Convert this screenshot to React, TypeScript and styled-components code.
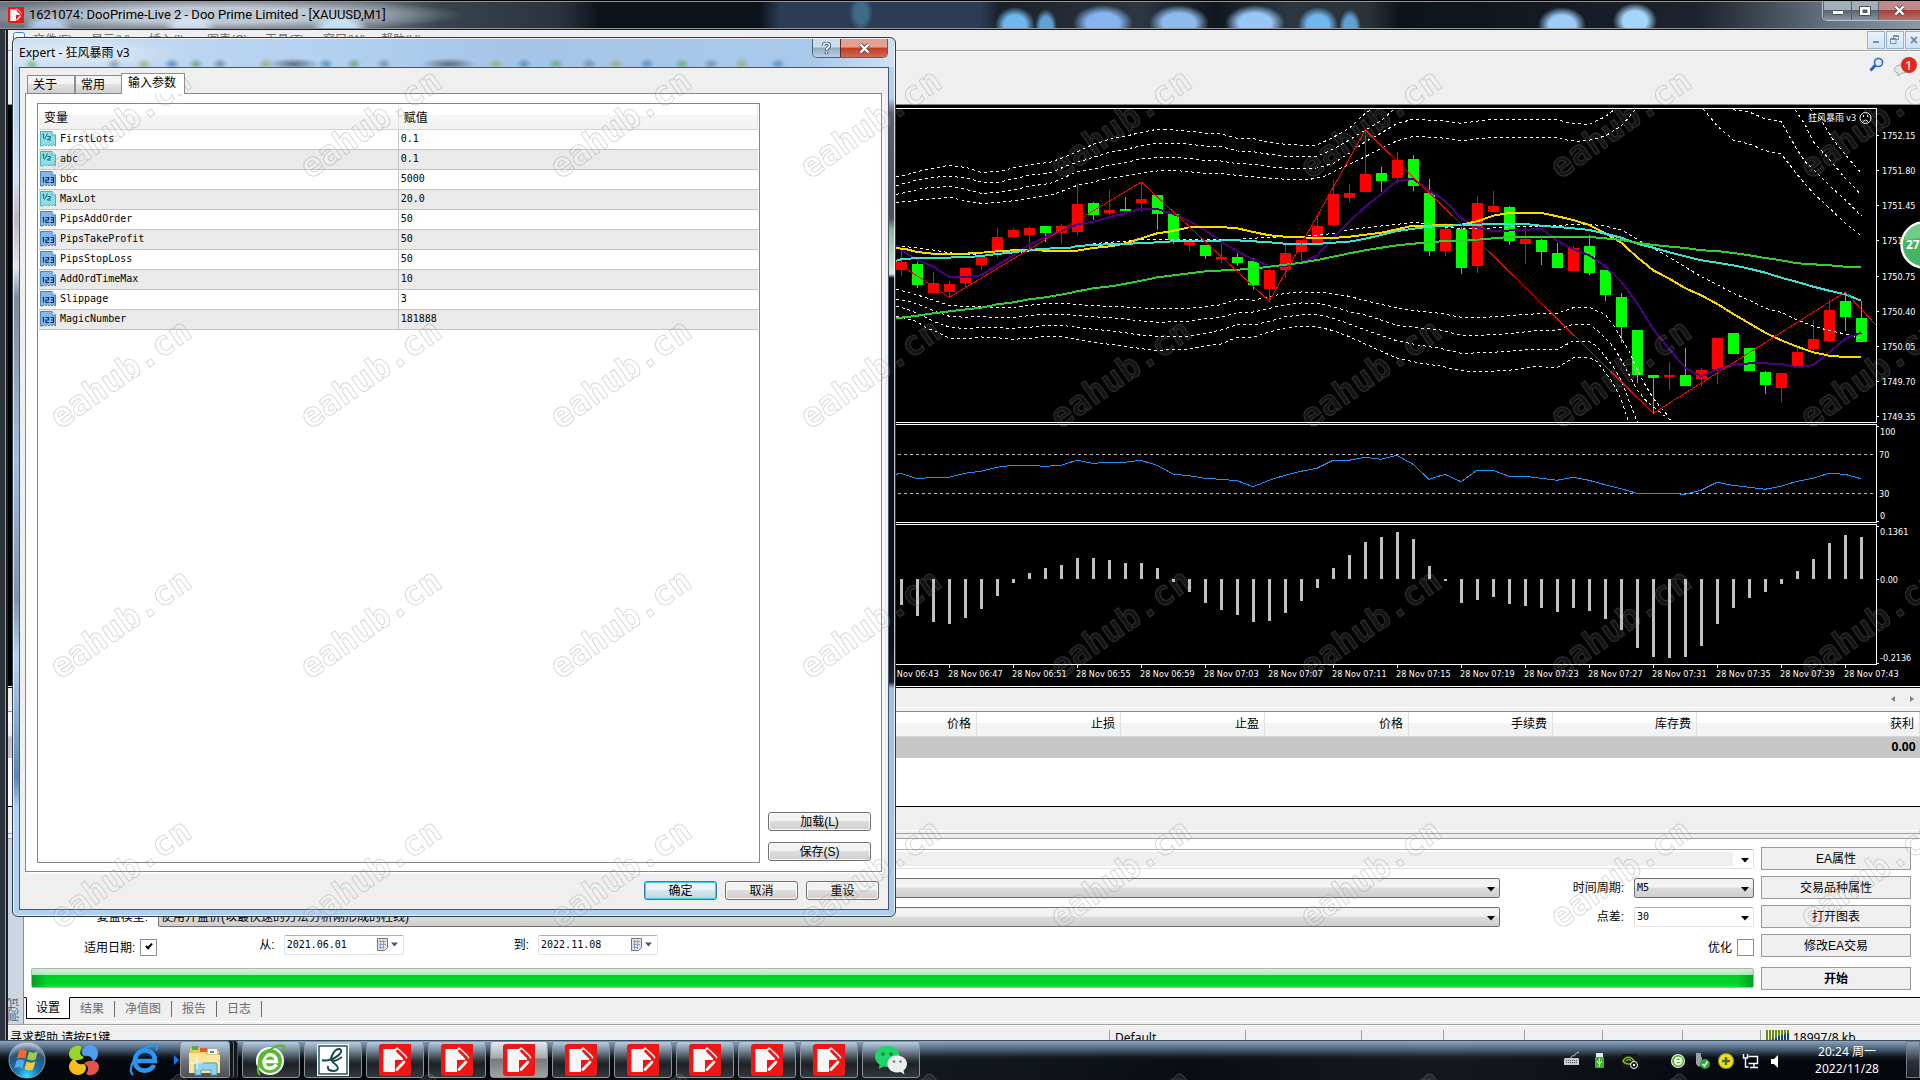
import React from "react";
import styled, { createGlobalStyle, css } from "styled-components";

const ui = `"Noto Sans", "Noto Sans CJK SC", sans-serif`;
const song = `"Liberation Sans", "Noto Sans CJK SC", sans-serif`;
const mono = `"DejaVu Sans Mono", "Noto Sans CJK SC", monospace`;

const Global = createGlobalStyle`
  *, *::before, *::after { box-sizing: border-box; }
  body { margin: 0; background: #000; font: 12px/16px ${song}; color: #000; }
  button, input, select { font: inherit; color: inherit; margin: 0; padding: 0; border-radius: 0; }
  svg { display: block; flex: none; }
`;

/* ---------- desktop and main window ---------- */

const Screen = styled.div`
  position: relative;
  display: flex;
  flex-direction: column;
  min-height: 100vh;
  overflow: hidden;
`;

const MainWindow = styled.main`
  flex: 1;
  display: flex;
  flex-direction: column;
  padding-left: 8px;
  background: linear-gradient(90deg, #2a323c 0 5px, #9aa3ac 5px 6px, #1a1e24 6px 8px, #efefef 8px);
`;

const blob = (x: number, w: number, c: string, y = 24) =>
  `radial-gradient(ellipse ${w}px 18px at ${x}px ${y}px, ${c} 0, ${c} 55%, transparent 100%)`;

const TitleBar = styled.header`
  display: flex;
  align-items: center;
  gap: 5px;
  height: 30px;
  margin-left: -8px;
  padding-left: 8px;
  border-top: 1px solid #000;
  border-bottom: 1px solid #15181c;
  box-shadow: inset 0 1px #8f959b, inset 0 -1px #8f959b;
  font: 13px/16px Roboto, ${ui};
  background:
    radial-gradient(ellipse 250px 17px at 215px 14px, rgba(222, 230, 240, 0.75) 0 45%, transparent 100%),
    ${blob(48, 26, "#a9c4ea", 30)},
    ${blob(190, 26, "#b8d4f4", 28)},
    ${blob(340, 30, "#b6dcf5", 30)},
    ${blob(861, 12, "#3d6a88", 12)},
    ${blob(1015, 20, "#6fb7ee")},
    ${blob(1046, 11, "#5fa3d4", 26)},
    ${blob(1103, 30, "#86b4ee", 22)},
    ${blob(1179, 30, "#8fbaee", 22)},
    ${blob(1255, 30, "#98c6f8", 22)},
    ${blob(1318, 20, "#6fb7ee")},
    ${blob(1350, 11, "#5fa3d4", 26)},
    ${blob(1562, 24, "#9dcbf8")},
    ${blob(1635, 22, "#a4d6fa", 20)},
    linear-gradient(90deg, #6b7680 0, #626d78 380px, #3a444e 440px, #2a333c 560px, #0d131b 600px, #0d131b 760px, #2c3c56 780px, #2c3c56 980px, #1a2028 1000px, #2c3742 1140px, #10161e 1215px, #2c3742 1290px, #2a3038 1370px, #0d131b 1400px, #10161e 1480px, #1d242d 1700px, #6a7886 1840px, #8b98a5 100%);
`;

const WindowTitle = styled.h1`
  flex: 1;
  margin: 0;
  font: inherit;
`;

const CaptionButtons = styled.div`
  display: flex;
  align-self: flex-start;
  height: 20px;
  border: 1px solid #b9c2cb;
  border-top: 0;
  border-right: 0;
  border-radius: 0 0 0 5px;
  overflow: hidden;
`;

const CaptionButton = styled.button<{ $w: number; $close?: boolean }>`
  display: grid;
  place-items: center;
  width: ${(p) => p.$w}px;
  border: 0;
  border-left: 1px solid #56616c;
  background: ${(p) =>
    p.$close
      ? "linear-gradient(#c08a8c 0 50%, #a8403c 50%, #b8706c)"
      : "linear-gradient(#a3aeb9 0 45%, #5a6672 50%, #8793a0)"};
`;

const MenuBar = styled.nav`
  display: flex;
  align-items: center;
  gap: 8px;
  height: 21px;
  padding: 0 0 0 5px;
  background: #efefef;
  border-bottom: 1px solid #a0a0a0;
  color: #707070;
`;

const MenuItem = styled.button`
  width: 50px;
  padding: 0;
  border: 0;
  background: none;
  text-align: left;
  white-space: nowrap;
`;

const MdiButtons = styled.div`
  display: flex;
  gap: 1px;
  margin: 0 -3px 0 auto;
`;

const MdiButton = styled.button`
  display: grid;
  place-items: center;
  width: 18px;
  height: 18px;
  border: 1px solid #9db2c8;
  background: linear-gradient(#eaf3fc, #cfe2f5);
`;

const ToolBar = styled.div`
  display: flex;
  align-items: flex-start;
  justify-content: flex-end;
  gap: 10px;
  height: 54px;
  padding: 5px 2px 0 0;
  background: #efefef;
  border-top: 1px solid #fff;
  border-bottom: 1px solid #8a8a8a;
`;

const IconButton = styled.button`
  border: 0;
  background: none;
`;

const ChartArea = styled.section`
  display: flex;
  justify-content: flex-end;
  height: 581px;
  background: #000;
  overflow: hidden;
`;

const ChartTabs = styled.div`
  display: flex;
  justify-content: flex-end;
  align-items: center;
  gap: 12px;
  height: 26px;
  padding-right: 4px;
  background: #efefef;
  border-top: 1px solid #fff;
  border-bottom: 1px solid #8c8c8c;
  box-shadow: inset 0 1px #000, inset 0 -3px #efefef, inset 0 -4px #fff;
`;

/* ---------- trade terminal ---------- */

const Terminal = styled.section`
  flex: 1;
  background: #fff;
`;

const TradeTable = styled.table`
  width: 100%;
  border-collapse: collapse;
  table-layout: fixed;
  text-align: right;
  font: 12px/16px ${ui};

  th {
    height: 24px;
    padding: 0 5px 0 0;
    font-weight: 400;
    background: linear-gradient(#fff 0 45%, #f4f5f6 45%, #f1f2f4);
    border-right: 1px solid #dfe1e5;
    border-bottom: 1px solid #d5d5d5;
  }
  td {
    height: 22px;
    padding: 0 4px 0 0;
    font-weight: 700;
    background: #c6c6c6;
    border-top: 1px solid #fff;
  }
`;

const TerminalTabs = styled.div`
  height: 33px;
  background: #efefef;
  border-top: 1px solid #000;
  border-bottom: 1px solid #a0a0a0;
  box-shadow: inset 0 -4px #efefef, inset 0 -5px #a0a0a0, inset 0 -7px #efefef, inset 0 -8px #fff;
`;

/* ---------- strategy tester ---------- */

const Tester = styled.section`
  display: flex;
`;

const SideTab = styled.div`
  display: flex;
  justify-content: flex-start;
  width: 16px;
  padding: 2px 0;
  background: #ccd6e2;
  border-left: 1px solid #8c8c8c;
  color: #5a6068;
  writing-mode: vertical-rl;
  transform: rotate(180deg);
  line-height: 15px;
`;

const TesterBody = styled.div`
  flex: 1;
  min-width: 0;
`;

const Form = styled.form`
  display: grid;
  grid-template-columns: 120px 1fr 120px 120px 150px;
  grid-template-rows: repeat(4, 23px) 27px;
  gap: 6px 7px;
  align-items: center;
  padding: 8px 9px 7px 7px;
  background: #fff;
  border-bottom: 1px solid #000;
`;

const Label = styled.label`
  justify-self: end;
  padding-right: 3px;
  white-space: nowrap;
`;

const SelectBox = styled.div<{ $span?: number; $flat?: boolean; $code?: boolean }>`
  position: relative;
  grid-column: span ${(p) => p.$span ?? 1};
  height: 20px;

  select {
    appearance: none;
    width: 100%;
    height: 100%;
    padding: 0 20px 0 2px;
    border: 1px solid #707070;
    border-radius: 2px;
    ${(p) => p.$code && `font: 10px/16px ${mono};`}
    background: linear-gradient(#f2f2f2 0 45%, #dcdcdc 50%, #cecece);
    ${(p) =>
      p.$flat &&
      css`
        border-color: #abadb3 #e2e3ea #e2e3ea #dbdfe6;
        background: #fff;
      `}
  }
  svg {
    position: absolute;
    right: 4px;
    top: 9px;
    pointer-events: none;
  }
`;

const GreySelectBox = styled(SelectBox)`
  select {
    background: linear-gradient(#efefef, #efefef) 0 2px / calc(100% - 20px) 14px no-repeat #fff;
  }
`;

const DateRow = styled.div`
  grid-column: 1 / 5;
  display: flex;
  align-items: center;
  padding-left: 53px;
`;

const DateLabel = styled.label`
  margin-bottom: 2px;
`;

const DateField = styled.div<{ $after?: number }>`
  display: flex;
  align-items: center;
  gap: 5px;
  width: 120px;
  height: 20px;
  margin: 0 ${(p) => p.$after ?? 0}px 2px 9px;
  padding: 0 4px 0 2px;
  border: 1px solid #e2e3ea;
  border-top-color: #abadb3;
  border-radius: 2px;

  input {
    flex: 1;
    min-width: 0;
    border: 0;
    font: 10px/16px ${mono};
  }
`;

const Check = styled.input`
  appearance: none;
  display: grid;
  place-items: center;
  width: 17px;
  height: 17px;
  margin: 0 0 0 5px;
  border: 1px solid #8c8c8c;
  background: #fff;

  &:checked::after {
    content: "";
    width: 4px;
    height: 7px;
    margin-bottom: 4px;
    border: solid #000;
    border-width: 0 2px 2px 0;
    transform: rotate(42deg);
  }
`;

const CheckLabel = styled.label`
  padding-top: 4px;
`;

const CheckWrap = styled.span`
  display: flex;
  align-items: center;
  padding-top: 4px;
`;

const Spacer = styled.span<{ $w?: number }>`
  ${(p) => (p.$w ? `width: ${p.$w}px;` : "flex: 1;")}
`;

const FlatButton = styled.button<{ $bold?: boolean }>`
  align-self: end;
  height: 23px;
  border: 1px solid #9a9a9a;
  background: #efefef;
  font-weight: ${(p) => (p.$bold ? 700 : 400)};
`;

const Progress = styled.div`
  grid-column: 1 / 5;
  align-self: end;
  height: 20px;
  margin-bottom: 2px;
  border: 1px solid #b2b2b2;
  border-radius: 2px;
  background:
    linear-gradient(rgba(255, 255, 255, 0.8), rgba(255, 255, 255, 0.65)) 0 0 / 100% 6px no-repeat,
    linear-gradient(90deg, #00a020, transparent 16px calc(100% - 16px), #00a020),
    linear-gradient(#00d228 0 75%, #18e038);
`;

const TesterTabs = styled.div`
  display: flex;
  align-items: flex-start;
  height: 26px;
  padding-left: 2px;
  background: #efefef;
  box-shadow: inset 0 -2px #efefef, inset 0 -3px #fff;
`;

const TesterTab = styled.button<{ $active?: boolean }>`
  height: 16px;
  margin-top: 3px;
  padding: 0 10px;
  border: 0;
  border-right: 1px solid #6d6d6d;
  background: none;
  color: #6d6d6d;
  ${(p) =>
    p.$active &&
    css`
      height: 22px;
      margin-top: -1px;
      padding: 0 9px;
      border: 1px solid #000;
      border-top-color: #fff;
      background: #fff;
      color: #000;
    `}
`;

const StatusBar = styled.footer`
  display: flex;
  align-items: flex-start;
  height: 16px;
  padding-top: 5px;
  background: #efefef;
  border-top: 1px solid #a0a0a0;
  box-shadow: inset 0 1px #fff;
  overflow: hidden;
  font: 12px/16px ${ui};
  white-space: nowrap;
`;

const StatusCell = styled.div<{ $w?: number }>`
  display: flex;
  gap: 4px;
  padding-left: 5px;
  height: 16px;
  border-left: 1px solid #a0a0a0;
  ${(p) => (p.$w ? `width: ${p.$w}px;` : "flex: 1; border-left: 0; padding-left: 2px;")}
`;

/* ---------- expert dialog ---------- */

const Dialog = styled.section`
  position: absolute;
  left: 12px;
  top: 37px;
  width: 884px;
  height: 880px;
  display: flex;
  flex-direction: column;
  padding: 0 7px 7px;
  border: 1px solid #2f3a47;
  border-radius: 6px;
  box-shadow: inset 0 0 0 1px rgba(255, 255, 255, 0.75);
  background:
    linear-gradient(#b4d1f0 0 60px, #5d636b 75px, #4b5158 180px, #8ab79a 192px, #d7e6da 236px, #0b1118 240px 610px, #1b232d 644px, #9fc0e2 650px, #a9cbee) right / 8px 100% no-repeat,
    linear-gradient(#b9d3ee 0 80px, #d3e2f2 140px, #c0b8c4 180px, #e4e6ee 230px, #7e8a99 260px, #a2bddd 420px, #7e93ad 560px, #b7d3f1 620px, #5f87af 740px, #b1d1f3 770px) left / 8px 100% no-repeat,
    linear-gradient(#a9c9ea, #b1d1f3);
`;

const DialogTitle = styled.header`
  display: flex;
  align-items: center;
  height: 28px;
  margin: 1px -6px 0;
  padding-left: 5px;
  font: 12px/16px ${ui};
  border-radius: 5px 5px 0 0;
  background:
    radial-gradient(ellipse 110px 18px at 60px 14px, rgba(255, 255, 255, 0.55), transparent),
    ${[18, 100, 130, 158, 182, 206, 252, 312, 340, 370, 482, 510, 542, 575, 602, 633, 668, 697, 728, 764]
      .map((x, i) => `radial-gradient(ellipse 8px 6px at ${x}px 25px, ${["#6fae8c", "#7b95ad", "#9eb08c", "#5f93c4"][i % 4]}, transparent)`)
      .join(",")},
    radial-gradient(ellipse 26px 6px at 280px 25px, #5c6f82, transparent),
    radial-gradient(ellipse 28px 6px at 435px 25px, #5c6f82, transparent),
    linear-gradient(90deg, #c7dcf1, #b4d1f0 300px, #a5c4e6 500px, #a9c9ea 800px, #cfe0f2);

  h2 {
    flex: 1;
    margin: 0;
    font: inherit;
  }
`;

const DialogCaption = styled.div`
  display: flex;
  align-self: flex-start;
  height: 19px;
  border: 1px solid #4f6478;
  border-top: 0;
  border-radius: 0 0 5px 5px;
  overflow: hidden;
  margin-right: 6px;

  button {
    display: grid;
    place-items: center;
    width: 27px;
    border: 0;
    background: linear-gradient(#c9dcee 0 45%, #93a9be 50%, #b6d0e8);
  }
  button + button {
    width: 47px;
    border-left: 1px solid #5b2a28;
    background: linear-gradient(#e6a090 0 45%, #c23c22 50%, #cf6a4c);
  }
`;

const DialogClient = styled.div`
  flex: 1;
  display: flex;
  flex-direction: column;
  min-height: 0;
  margin: 0 -1px -1px;
  padding: 5px 6px 9px 5px;
  border: 1px solid #46566a;
  background: #efefef;
`;

const Tabs = styled.div`
  display: flex;
  align-items: flex-end;
  padding-left: 2px;
  height: 20px;
`;

const Tab = styled.button<{ $active?: boolean }>`
  width: 48px;
  height: 18px;
  padding: 0 5px;
  border: 1px solid #8c8e96;
  border-bottom: 0;
  background: linear-gradient(#f3f3f3 0 50%, #e2e2e2 50%, #cfcfcf);
  text-align: left;
  ${(p) =>
    p.$active &&
    css`
      width: 64px;
      height: 21px;
      margin: 0 0 -1px -2px;
      padding: 0 6px 2px;
      background: #fff;
      z-index: 1;
    `}
`;

const Page = styled.div`
  flex: 1;
  display: flex;
  gap: 8px;
  min-height: 0;
  padding: 9px 10px 8px 11px;
  border: 1px solid #828790;
  box-shadow: 2px 2px #fbfbfb;
  background: #fff;
`;

const ListBox = styled.div`
  flex: 1;
  padding: 1px;
  border: 1px solid #828790;
`;

const ParamTable = styled.table`
  width: 100%;
  border-collapse: collapse;
  table-layout: fixed;

  th {
    height: 24px;
    padding: 2px 0 0 5px;
    text-align: left;
    font-weight: 400;
    background: linear-gradient(#fff 0 40%, #f5f6f7 40%, #f0f1f3);
    border-right: 1px solid #e3e4e8;
    border-bottom: 1px solid #d5d5d5;
  }
  td {
    height: 20px;
    padding: 0 0 0 2px;
    border-bottom: 1px solid #c4c4c4;
    font: 10px/16px ${mono};
  }
  td:first-child {
    padding: 0 0 0 1px;
    border-right: 1px solid #c4c4c4;
  }
  tbody tr:nth-child(even) td {
    background: #eaeaea;
  }
`;

const ParamName = styled.span`
  display: flex;
  align-items: center;
  gap: 4px;
`;

const SideButtons = styled.div`
  display: flex;
  flex-direction: column;
  justify-content: flex-end;
  gap: 11px;
  padding-bottom: 2px;
`;

const Button = styled.button<{ $w: number; $primary?: boolean }>`
  width: ${(p) => p.$w}px;
  height: 19px;
  line-height: 16px;
  border: 1px solid #707070;
  border-radius: 3px;
  box-shadow: inset 0 0 0 1px #fbfbfb;
  background: linear-gradient(#f2f2f2 0 48%, #dddddd 50%, #cfcfcf);
  ${(p) =>
    p.$primary &&
    css`
      border-color: #2c7fb0;
      box-shadow: inset 0 0 0 1px #3fcdf6;
      background: linear-gradient(#eaf4f9 0 48%, #d6e4ec 50%, #c4d5df);
    `}
`;

const DialogButtons = styled.div`
  display: flex;
  justify-content: flex-end;
  gap: 8px;
  padding: 9px 3px 0 0;
`;

/* ---------- taskbar ---------- */

const TaskBar = styled.footer`
  display: flex;
  align-items: center;
  height: 40px;
  padding-bottom: 2px;
  border-top: 1px solid #3c4c5c;
  background:
    linear-gradient(rgba(160, 195, 230, 0.85), rgba(120, 150, 180, 0.55) 9px, rgba(60, 80, 100, 0.15) 16px, transparent 20px),
    linear-gradient(100deg, #05090d 0 30%, #161b20 45%, #0a0e13 62%, #15191e 75%, #05090f 90%);
`;

const Pinned = styled.button<{ $w: number }>`
  display: grid;
  place-items: center;
  width: ${(p) => p.$w}px;
  height: 37px;
  border: 0;
  background: none;
`;

const Task = styled.button<{ $w?: number; $active?: boolean; $light?: boolean; $stack?: boolean }>`
  display: grid;
  place-items: center;
  width: ${(p) => p.$w ?? 58}px;
  height: 37px;
  margin-right: ${(p) => (p.$stack ? 12 : 4)}px;
  border: 1px solid #8c9298;
  border-radius: 3px;
  box-shadow: ${(p) => (p.$stack ? "3px 0 #10161c, 4px 0 #68727c, 7px 0 #10161c, 8px 0 #4a545e" : "none")};
  background: ${(p) =>
    p.$active
      ? "linear-gradient(#e4ebf2, #a3a9af 45%, #77797b 50%, #a0a2a4)"
      : p.$light
        ? "linear-gradient(#b6cee4, #8b9aa8 30%, #6a7178 55%, #4a5056)"
        : "linear-gradient(#b6cee4, #7e8fa0 8px, #30383f 18px, #1d2125 22px, #33383c)"};
`;

const Tray = styled.div`
  display: flex;
  align-items: center;
  gap: 4px;
  margin-left: auto;
`;

const Clock = styled.time`
  width: 110px;
  color: #fff;
  font: 12px/17px ${ui};
  text-align: center;
`;

const ShowDesktop = styled.button`
  width: 14px;
  height: 37px;
  border: 1px solid #6f7a84;
  background: linear-gradient(#8fa4b8, #2a3138 20px, #1c2126);
`;

const Watermark = styled.svg`
  position: absolute;
  inset: 0;
  width: 100%;
  height: 100%;
  pointer-events: none;
`;

const SideBadge = styled.svg`
  position: absolute;
  right: 0;
  top: 221px;
`;

/* ---------- icons ---------- */

const Mt4Icon = ({ size = 32 }: { size?: number }) => (
  <svg width={size} height={size} viewBox="0 0 32 32">
    <rect width="32" height="32" rx="3" fill="#f01616" />
    <path d="M4.500 5H17l7 6v5h-8v12l-2 0H4.500z" fill="#f6f6f6" />
    <path d="M16 16h9v8l-5 4h-4z" fill="#f01616" />
    <path d="M17 4l11 10" stroke="#f6f6f6" strokeWidth="3" />
    <path d="M18.500 7l7 7" stroke="#f01616" strokeWidth="2.800" strokeLinecap="round" />
    <path d="M18 25.500l7-7.500" stroke="#f6f6f6" strokeWidth="2.800" strokeLinecap="round" />
    <path d="M20 0h12v14h-3z" fill="#f01616" />
  </svg>
);

const ParamIcon = ({ real }: { real: boolean }) => (
  <svg width="16" height="16" viewBox="0 0 16 16">
    <path
      d="M.5.500h11.500l3.500 3.500V15l-2-1.500-1.500 1.500-1.500-1.500L9 15l-1.500-1.500L6 15l-1.500-1.500L3 15l-2.500 0z"
      fill={real ? "#8ddde4" : "#85b8ea"}
      stroke={real ? "#4bb3be" : "#4684c0"}
    />
    <path d="M12 .500V4h3.500" fill="#fff" stroke={real ? "#4bb3be" : "#4684c0"} />
    {real ? (
      <path d="M2.500 3.500l1-.5v4.500M7.500 2.500L4.500 8.500M7.500 5.500h3v1.500l-3 1.500v.5h3.500" fill="none" stroke="#126a7a" />
    ) : (
      <path d="M2.500 6.500h1v5M5.500 6.500h3V9h-2.500v2.500h3M10.500 6.500h3v5h-3M11 9h2.500" fill="none" stroke="#0c2c66" strokeWidth="1.200" />
    )}
  </svg>
);

const Arrow = () => (
  <svg width="9" height="5" viewBox="0 0 9 5">
    <path d="M0 0h8L4 4.500z" fill="#000" />
  </svg>
);

const CalendarIcon = () => (
  <svg width="22" height="13" viewBox="0 0 22 13">
    <path d="M.5.500h10v9l-3 3h-7z" fill="#dfe3ea" stroke="#77706e" />
    <path d="M2 3.500h7M2 6.500h7M2 9.500h5M3.500 2v9M6.500 2v9" stroke="#8fa0bc" />
    <path d="M14 4.500h7L17.500 8.500z" fill="#3f5787" />
  </svg>
);

const CloseGlyph = () => (
  <svg width="13" height="11" viewBox="0 0 13 11">
    <path d="M2.500 1.500l8 8M10.500 1.500l-8 8" stroke="#4a4f58" strokeWidth="4" />
    <path d="M2.500 1.500l8 8M10.500 1.500l-8 8" stroke="#fff" strokeWidth="2.400" />
  </svg>
);

const StartOrb = () => (
  <svg width="38" height="38" viewBox="0 0 38 38">
    <defs>
      <radialGradient id="orb" cx=".5" cy=".95" r=".9">
        <stop offset="0" stopColor="#35e0ff" />
        <stop offset=".35" stopColor="#1477b4" />
        <stop offset=".75" stopColor="#2a5278" />
        <stop offset="1" stopColor="#b9c8d4" />
      </radialGradient>
    </defs>
    <circle cx="19" cy="19" r="18" fill="url(#orb)" stroke="#8ba3b8" />
    <path d="M11 9.500c3-1.500 6-1 8 .5l-2 8c-2-1.500-5-1.500-8-.5z" fill="#ee6a2c" />
    <path d="M21 10.500c3 1.500 6 1.500 9 0l-2.500 8c-3 1.500-6 1-8.500-.5z" fill="#9ccb4a" />
    <path d="M8.500 19.500c3-1.500 6-1 8 .5l-2 7.500c-2-1.500-5-1.500-8-.5z" fill="#58a8e8" />
    <path d="M18.500 20.500c3 1.500 6 1.500 9 0l-2.500 8c-3 1.500-6 1-8.500-.5z" fill="#fbc62e" />
  </svg>
);

const PetalIcon = () => (
  <svg width="32" height="32" viewBox="0 0 32 32">
    <path d="M8 2C3 3 1 7 1 10c0 5 5 7 9 6 3 0 5-1 6-3-4-1-5-5-3-8 1-2 0-4-5-3z" fill="#9bd32a" />
    <path d="M22 1c-5 0-8 4-8 7 0 2 1 4 3 4 4-1 7 1 8 5 2 0 5-3 5-8 0-4-3-8-8-8z" fill="#4f9df0" />
    <path d="M24 31c5-1 7-5 7-8 0-5-5-7-9-6-3 0-5 1-6 3 4 1 5 5 3 8-1 2 0 4 5 3z" fill="#e2534a" />
    <path d="M10 31c5 0 8-4 8-7 0-2-1-4-3-4-4 1-7-1-8-5-2 0-6 3-6 8 0 4 4 8 9 8z" fill="#f5be1e" />
  </svg>
);

const BrowserE = ({ color, disc }: { color: string; disc?: boolean }) => (
  <svg width="32" height="32" viewBox="0 0 32 32">
    {disc && <circle cx="15" cy="17" r="14" fill="#fff" />}
    {disc && <circle cx="15" cy="17" r="12" fill={color} />}
    {disc ? (
      <path d="M9 17.500h12.500c0-9-12.500-9-12.500 0s9 8 12.500 3" fill="none" stroke="#fff" strokeWidth="3.400" />
    ) : (
      <path d="M7 17h20c.5-14-20-14-20 0 0 12 16 12 19 4" fill="none" stroke={color} strokeWidth="4.600" />
    )}
    <path d="M5 31C-2 26 9 4 25 1.500c5-.5 5 2 3 5" fill="none" stroke={color} strokeWidth="2.200" />
  </svg>
);

const FolderIcon = () => (
  <svg width="34" height="32" viewBox="0 0 34 32">
    <path d="M2 4h9l2 3h18v22H2z" fill="#e9c85c" />
    <path d="M4 2h6v4H4z" fill="#4caf50" />
    <path d="M12 4h7v4h-7z" fill="#e05a3a" />
    <path d="M20 5h9v5h-9z" fill="#f6f6f6" />
    <path d="M22 7h4v2h-4z" fill="#3f8fe0" />
    <path d="M1 9h15l3 2h13v18H1z" fill="#f8e59a" />
    <path d="M7 31V21q0-2 2-2h18q2 0 2 2v10h-6v-5H13v5z" fill="#8fd3ee" stroke="#4c9cc0" />
    <path d="M9 13v12M3 19h12" stroke="#fff" />
  </svg>
);

const ScriptIcon = () => (
  <svg width="32" height="32" viewBox="0 0 32 32">
    <rect width="32" height="32" fill="#fff" />
    <rect x="2" y="2" width="28" height="28" fill="#fff" stroke="#1f5560" strokeWidth="1.500" />
    <path
      d="M5 16c4 2 16-2 19-8 1-4-4-4-7 0-2 3-5 9-1 9 3 0 6-2 9-4M19 13c-6 3-4 5-1 7s5 6-1 7c-5 0-7-2-6-5"
      fill="none"
      stroke="#1f4a54"
      strokeWidth="2"
    />
  </svg>
);

const WeChatIcon = () => (
  <svg width="34" height="32" viewBox="0 0 34 32">
    <path d="M13 2C5.500 2 1 7 1 12.500c0 3.500 2 6.500 4.500 8L5 25l4.500-2.500c8 2 16-3 16-10C25.500 7 20 2 13 2z" fill="#1fd366" />
    <circle cx="9" cy="10" r="1.700" fill="#0b7a3c" />
    <circle cx="17" cy="10" r="1.700" fill="#0b7a3c" />
    <path d="M23 11.500c-6 0-9.500 4-9.500 8.500s4 8.500 9.500 8.500c1.500 0 2.500-.2 3.500-.5l4 2.500-1-4c2-1.500 3.500-4 3.500-6.500 0-4.500-4-8.500-10-8.500z" fill="#ededed" />
    <circle cx="20" cy="17.500" r="1.300" fill="#777" />
    <circle cx="26.500" cy="17.500" r="1.300" fill="#777" />
  </svg>
);

const TrayIcons = () => (
  <svg width="226" height="24" viewBox="1562 1048 226 24">
    <path d="M1565 1058h13q1 0 1 1v6h-15v-6z" fill="#c9cccf" />
    <path d="M1566 1060.500h11M1566 1062.500h11" stroke="#55595e" strokeDasharray="1 1" />
    <path d="M1571 1058c0-4 4-1 4-3s3-2 4-3" fill="none" stroke="#c9cccf" />
    <rect x="1596" y="1053" width="7" height="4" fill="#e9e9e9" />
    <rect x="1595" y="1057" width="9" height="11" rx="1" fill="#3cb62c" />
    <path d="M1599.500 1058.500v8M1597 1061l2.500 3 2.500-3" fill="none" stroke="#fff" />
    <rect x="1622" y="1054" width="15" height="14" fill="#15170f" />
    <path d="M1623 1061c3-5 8-5 11 0-3 4-8 4-11 0zM1626 1061c2-2 4-2 5 0" fill="none" stroke="#7dbb1c" strokeWidth="1.500" />
    <circle cx="1634" cy="1065" r="3.500" fill="#111" stroke="#fff" />
    <circle cx="1634" cy="1065" r="1.200" fill="#fff" />
    <circle cx="1678" cy="1061" r="7" fill="#e8f6e0" />
    <circle cx="1678" cy="1061" r="6" fill="#58b92e" />
    <path d="M1675 1061h6.500c0-4.500-6.500-4.500-6.500 0s5 4 6.500 1.500" fill="none" stroke="#fff" strokeWidth="1.800" />
    <path d="M1696 1053h5v4h1v7l-3 3-3-3z" fill="#9ba0a4" />
    <circle cx="1705" cy="1064" r="5" fill="#2fa63a" />
    <path d="M1702.500 1064l2 2 3-4.500" fill="none" stroke="#fff" strokeWidth="1.500" />
    <circle cx="1726" cy="1061" r="8" fill="#6fb128" />
    <circle cx="1726" cy="1061" r="7" fill="#ffd51e" />
    <path d="M1726 1057v8M1722 1061h8" stroke="#28801c" strokeWidth="2.400" />
    <path d="M1748.500 1056.500h9v7h-9M1750 1067.500h8M1754 1064v3M1743.500 1054v4h4v-4M1745.500 1058v9h3" fill="none" stroke="#fff" strokeWidth="1.400" />
    <path d="M1771 1059h3l4-4v13l-4-4h-3z" fill="#fff" />
  </svg>
);

/* ---------- chart ---------- */

type P = [number, number];
/* Series are kept in third-pixel units: the left half is measured from (880,100), the right half from (1400,0). */
const line = (left: P[], right: P[] = []) =>
  [...left.map(([x, y]) => [880 + x / 3, 100 + y / 3]), ...right.map(([x, y]) => [1400 + x / 3, y / 3])]
    .map(([x, y]) => `${x.toFixed(1)},${y.toFixed(1)}`)
    .join(" ");

const bands = [
  line([[48,230],[64,228],[130,210],[208,196],[260,203],[304,217],[352,215],[400,204],[448,194],[510,187],[544,175],[592,155],[640,133],[688,118],[736,109],[784,97],[832,88],[880,89],[928,94],[976,99],[1024,102],[1072,115],[1120,116],[1168,127],[1216,133],[1264,136],[1312,135],[1360,112],[1408,85],[1456,40],[1475,27]]),
  line([[48,257],[112,240],[160,232],[208,229],[256,233],[304,246],[352,247],[400,237],[448,226],[512,218],[560,197],[592,187],[640,172],[688,157],[736,148],[784,138],[832,130],[900,130],[976,138],[1024,140],[1072,153],[1120,155],[1168,163],[1216,169],[1312,169],[1360,147],[1408,120],[1456,90],[1504,62],[1542,27]]),
  line([[48,283],[64,280],[130,265],[208,259],[256,268],[304,280],[352,278],[400,270],[448,259],[512,250],[592,215],[640,208],[688,195],[736,187],[784,177],[832,172],[900,173],[976,181],[1024,183],[1072,191],[1120,193],[1168,200],[1216,205],[1312,204],[1360,190],[1408,160],[1456,125],[1504,99],[1552,70]],
    [[40,358],[120,362],[184,370],[256,360],[330,358],[400,358],[472,360],[520,371],[568,373],[616,350],[645,327]]),
  line([[48,308],[112,301],[208,292],[256,302],[304,310],[352,308],[400,302],[448,295],[512,285],[540,276],[592,256],[640,246],[688,234],[736,228],[784,220],[832,213],[880,211],[928,215],[976,221],[1024,221],[1072,226],[1120,230],[1168,234],[1216,238],[1290,238],[1330,230],[1360,215],[1408,193],[1456,170],[1504,145],[1552,122]],
    [[40,409],[120,413],[184,422],[256,414],[330,413],[400,412],[472,412],[500,420],[530,424],[568,421],[616,408],[664,378],[705,330]]),
  line([[48,438],[80,440],[160,450],[208,458],[256,463],[304,466],[352,462],[400,460],[448,453],[500,448],[592,440],[640,431],[700,426],[784,420],[880,418],[1072,418],[1130,414],[1216,410],[1264,409],[1312,406],[1360,400],[1408,390],[1456,383],[1504,378],[1552,373]],
    [[40,667],[88,672],[136,683],[232,686],[328,681],[400,679],[520,674],[568,673],[616,678],[664,690],[712,718],[760,745],[808,772],[856,801],[904,830],[952,854],[1000,880],[1048,901],[1096,925],[1144,937],[1192,960],[1240,978],[1288,992],[1336,1002],[1384,1015]]),
  line([[48,568],[80,576],[112,585],[160,600],[208,616],[256,620],[352,622],[400,622],[448,616],[500,610],[570,612],[640,617],[720,620],[784,624],[832,626],[920,626],[976,620],[1024,614],[1072,598],[1120,601],[1168,590],[1216,580],[1264,576],[1340,578],[1408,589],[1456,602],[1504,613],[1552,624]],
    [[60,934],[120,940],[184,952],[256,952],[328,947],[400,942],[472,940],[520,923],[568,922],[616,944],[640,975],[664,1015],[688,1055],[712,1110],[736,1155],[760,1195],[784,1225],[808,1252]]),
  line([[48,597],[80,602],[112,612],[160,632],[208,649],[256,652],[304,649],[352,653],[400,652],[448,647],[500,642],[570,645],[640,650],[720,655],[784,663],[832,667],[928,664],[976,656],[1024,652],[1072,638],[1120,636],[1168,625],[1216,614],[1264,609],[1312,610],[1360,620],[1408,635],[1456,645],[1504,660],[1552,676]],
    [[60,984],[120,990],[184,1006],[256,1005],[328,1001],[400,993],[472,991],[520,973],[568,974],[592,990],[640,1040],[664,1080],[712,1170],[736,1200],[760,1220],[790,1245],[820,1266]]),
  line([[48,618],[80,627],[112,640],[160,664],[208,681],[256,686],[304,682],[400,685],[448,682],[496,676],[560,678],[608,685],[688,692],[736,698],[784,706],[832,709],[928,709],[976,700],[1024,690],[1072,674],[1120,675],[1168,664],[1216,650],[1264,645],[1312,643],[1360,655],[1408,672],[1456,690],[1504,706],[1552,723]],
    [[60,1036],[120,1045],[184,1060],[256,1058],[328,1054],[400,1048],[472,1048],[520,1023],[568,1024],[592,1040],[640,1100],[664,1140],[690,1210],[712,1266]]),
  line([[48,648],[80,656],[112,665],[140,685],[170,695],[208,714],[256,716],[304,711],[352,713],[400,718],[448,715],[500,709],[544,709],[592,719],[640,727],[688,733],[736,739],[784,746],[832,751],[928,747],[976,738],[1024,732],[1072,711],[1120,711],[1168,696],[1216,684],[1264,679],[1312,680],[1360,692],[1408,710],[1456,732],[1504,754],[1552,775]],
    [[60,1089],[120,1098],[184,1112],[240,1115],[328,1111],[400,1100],[472,1102],[520,1073],[568,1073],[592,1085],[616,1118],[640,1150],[664,1200],[684,1260]]),
  line([], [[910,327],[952,378],[1000,420],[1048,432],[1096,452],[1144,462],[1192,524],[1240,580],[1288,624],[1336,670],[1384,708]]),
  line([], [[1000,329],[1048,336],[1096,357],[1144,365],[1160,395],[1192,450],[1216,485],[1240,508],[1288,556],[1336,600],[1384,648]]),
  line([], [[1186,329],[1216,375],[1240,425],[1288,478],[1336,535],[1384,584]]),
  line([], [[1230,327],[1264,360],[1300,420],[1336,464],[1384,520]]),
];

const averages = [
  { color: "#4b0082", points: line([[48,436],[80,460],[112,480],[160,500],[208,531],[256,531],[304,526],[352,495],[400,466],[448,434],[496,411],[544,393],[592,373],[640,365],[688,352],[736,340],[784,326],[832,327],[880,342],[928,363],[976,391],[1024,427],[1072,453],[1120,480],[1168,498],[1216,498],[1264,488],[1312,466],[1360,412],[1408,365],[1456,320],[1504,282],[1552,242]],
    [[40,537],[88,572],[136,603],[184,655],[232,683],[280,693],[376,690],[424,686],[472,722],[520,748],[568,766],[616,798],[664,845],[712,910],[760,988],[808,1048],[856,1104],[904,1129],[952,1108],[1000,1094],[1072,1088],[1144,1093],[1192,1102],[1240,1095],[1288,1057],[1336,1016],[1384,998]]) },
  { color: "#ffd700", points: line([[48,444],[80,448],[112,456],[160,461],[256,461],[304,458],[352,454],[400,451],[448,449],[496,452],[592,452],[640,444],[700,438],[750,426],[784,415],[832,400],[880,393],[930,381],[1020,381],[1072,385],[1120,396],[1168,406],[1216,410],[1264,412],[1312,414],[1360,414],[1408,410],[1456,404],[1504,398],[1552,388]],
    [[30,679],[88,677],[136,674],[184,674],[232,664],[280,647],[328,639],[424,639],[472,649],[520,660],[568,675],[616,700],[664,728],[712,772],[760,811],[808,836],[856,865],[904,886],[952,912],[1000,942],[1048,970],[1096,998],[1144,1021],[1192,1040],[1240,1057],[1288,1067],[1336,1071],[1384,1071]]) },
  { color: "#40e0d0", points: line([[48,482],[64,478],[112,474],[256,472],[304,468],[352,462],[400,457],[448,450],[496,446],[570,443],[592,438],[640,435],[700,432],[784,430],[832,427],[880,424],[976,422],[1072,421],[1120,424],[1168,427],[1216,431],[1312,432],[1360,428],[1408,425],[1456,416],[1504,405],[1552,393]],
    [[40,686],[88,680],[136,677],[184,676],[232,674],[280,672],[376,672],[424,677],[472,681],[520,685],[568,690],[616,701],[664,713],[712,731],[760,743],[808,757],[856,769],[904,781],[952,788],[1000,796],[1048,806],[1096,818],[1144,833],[1192,846],[1240,860],[1288,872],[1336,883],[1384,902]]) },
  { color: "#32cd32", points: line([[48,655],[112,647],[160,640],[208,634],[304,623],[352,613],[400,607],[448,598],[496,592],[544,584],[592,574],[640,565],[700,558],[784,542],[832,532],[880,526],[928,520],[976,514],[1072,509],[1120,506],[1168,500],[1216,494],[1264,488],[1312,480],[1360,470],[1408,460],[1456,451],[1504,443],[1552,436]],
    [[40,731],[88,727],[136,723],[184,723],[232,719],[280,715],[328,711],[568,711],[616,715],[664,720],[712,728],[760,735],[856,744],[904,751],[952,753],[1000,759],[1048,766],[1096,774],[1144,781],[1192,790],[1240,793],[1288,796],[1336,800],[1384,801]]) },
];

const zigzag = line([[48,486],[208,592],[784,246],[1168,604],[1456,90]], [[760,1240],[1336,876],[1428,975]]);

/* direction, body top, body bottom, wick top, wick bottom; one entry every 16 px */
type C = ["r" | "g", number, number, number, number];
const candlesLeft: C[] = [
  ["r",486,510,450,528],["g",492,555,486,564],["r",549,579,516,579],["r",552,576,543,592],["r",504,549,504,563],["r",472,495,465,510],
  ["r",411,456,384,474],["r",390,411,384,411],["r",384,405,378,447],["g",378,399,378,426],["r",378,399,372,432],["r",312,396,249,405],
  ["g",309,345,306,360],["r",330,339,270,345],["g",327,333,291,333],["r",297,309,246,336],["g",285,342,285,390],["g",342,420,342,432],
  ["r",426,435,420,453],["g",435,468,435,477],["r",471,476,432,489],["g",471,489,459,498],["g",483,555,474,570],["r",510,567,507,603],
  ["r",459,510,435,534],["r",420,456,420,487],["r",378,432,346,432],["r",282,375,240,381],["r",279,294,252,306],["r",222,276,90,276],
  ["g",219,243,201,276],["r",180,234,156,249],
];
const candlesRight: C[] = [
  ["g",477,558,465,573],["g",579,753,537,768],["r",687,753,670,768],["g",687,804,682,822],["r",609,798,588,819],["r",618,636,573,636],
  ["g",621,723,618,735],["r",717,732,682,792],["g",720,756,717,795],["g",759,804,729,804],["r",744,813,738,813],["g",738,819,705,825],
  ["g",810,885,810,903],["g",891,981,879,1029],["g",990,1125,990,1149],["g",1125,1134,1125,1240],["r",1125,1131,1086,1170],["g",1125,1158,1044,1158],
  ["r",1110,1137,1104,1158],["r",1014,1107,1014,1152],["g",999,1062,999,1062],["g",1044,1113,1044,1113],["g",1116,1155,1113,1182],["r",1119,1164,1119,1206],
  ["r",1056,1098,1040,1101],["r",1017,1047,960,1050],["r",930,1023,897,1026],["g",903,951,873,993],["g",954,1026,903,1026],
];
const candles = [...candlesLeft.map(([k, ...v]) => ({ k, v: v.map((n) => Math.round(100 + n / 3)) })),
  ...candlesRight.map(([k, ...v]) => ({ k, v: v.map((n) => Math.round(n / 3)) }))];

const rsi = [160,176,172,172,160,154,142,136,136,139,136,121,130,127,127,121,136,162,167,175,178,182,200,181,166,154,145,121,121,112,118,106,133,178,163,185,151,151,169,169,175,181,172,181,194,206,220,220,220,223,211,187,196,202,208,199,184,175,160,163,176];
const momentum = [555,588,606,612,594,567,528,489,459,444,435,414,414,420,429,429,444,487,516,549,570,585,606,603,579,543,504,444,405,366,351,336,357,438,483,549,540,531,552,558,564,576,564,573,597,630,684,711,714,711,678,612,564,534,516,492,453,417,369,345,351];

const prices: [string, number][] = [["1752.15",135],["1751.80",170],["1751.45",205],["1751.10",240],["1750.75",276],["1750.40",311],["1750.05",346],["1749.70",381],["1749.35",416]];
const times = ["06:43","06:47","06:51","06:55","06:59","07:03","07:07","07:11","07:15","07:19","07:23","07:27","07:31","07:35","07:39","07:43"];

const AxisText = styled.text`
  font: 9px "DejaVu Sans Condensed", "DejaVu Sans", sans-serif;
  fill: #fff;
`;

const Chart = () => (
  <svg width="1040" height="581" viewBox="880 105 1040 581" role="img" aria-label="XAUUSD M1">
    <defs>
      <clipPath id="plot"><rect x="880" y="109" width="996" height="313" /></clipPath>
    </defs>
    <g shapeRendering="crispEdges" clipPath="url(#plot)">
      {candles.map(({ k, v: [t, b, wt, wb] }, i) => {
        const x = 901 + i * 16;
        const fill = k === "r" ? "#ff0000" : "#00ff00";
        return (
          <g key={i} fill={fill}>
            <rect x={x} y={wt} width="1" height={wb - wt} />
            <rect x={x - 5} y={t} width="11" height={Math.max(1, b - t)} />
          </g>
        );
      })}
      {bands.map((p, i) => <polyline key={i} points={p} fill="none" stroke="#fff" strokeDasharray="3 3" />)}
      {averages.map((a) => <polyline key={a.color} points={a.points} fill="none" stroke={a.color} strokeWidth="2" />)}
      <polyline points={zigzag} fill="none" stroke="#ff0000" />
    </g>
    <g shapeRendering="crispEdges" fill="none" stroke="#fff">
      <path d="M880 108.500H1876.500V422.500H880M880 424.500H1876.500V522.500H880M880 524.500H1876.500V664.500H880" />
      <path d={prices.map(([, y]) => `M1877 ${y + 0.5}h2`).join("")} />
      <path d="M1877 426.500h2M1877 521.500h2M1877 526.500h2M1877 579.500h2M1877 663.500h2" />
      <path d={times.map((_, i) => `M${885.5 + i * 64} 665v3`).join("")} />
      <path d="M880 454.500H1876M880 493.500H1876" stroke="#c0c0c0" strokeDasharray="3 3" />
      <polyline points={"896,474.300 " + rsi.map((v, i) => `${901 + i * 16},${(420 + v / 3).toFixed(1)}`).join(" ")} stroke="#1e90ff" />
    </g>
    <g fill="#c0c0c0" shapeRendering="crispEdges">
      {momentum.map((v, i) => {
        const y = Math.round(420 + v / 3);
        return <rect key={i} x={900 + i * 16} y={Math.min(y, 579)} width="3" height={Math.abs(y - 579)} />;
      })}
    </g>
    {prices.map(([t, y]) => <AxisText key={t} x="1882" y={y + 4}>{t}</AxisText>)}
    <AxisText x="1880" y="435">100</AxisText>
    <AxisText x="1879" y="458">70</AxisText>
    <AxisText x="1879" y="497">30</AxisText>
    <AxisText x="1880" y="519">0</AxisText>
    <AxisText x="1880" y="535">0.1361</AxisText>
    <AxisText x="1880" y="583">0.00</AxisText>
    <AxisText x="1880" y="661">-0.2136</AxisText>
    {times.map((t, i) => <AxisText key={t} x={884 + i * 64} y="677">28 Nov {t}</AxisText>)}
    <text x="1808" y="121" fill="#fff" fontSize="9" fontFamily={ui}>狂风暴雨 v3</text>
    <g fill="none" stroke="#fff">
      <circle cx="1865.500" cy="118" r="5.500" />
      <path d="M1863 121.500q2.500-3 5 0M1863.500 115v2M1867.500 115v2" />
    </g>
  </svg>
);

/* ---------- data ---------- */

const params: [string, string, boolean][] = [
  ["FirstLots", "0.1", true],
  ["abc", "0.1", true],
  ["bbc", "5000", false],
  ["MaxLot", "20.0", true],
  ["PipsAddOrder", "50", false],
  ["PipsTakeProfit", "50", false],
  ["PipsStopLoss", "50", false],
  ["AddOrdTimeMax", "10", false],
  ["Slippage", "3", false],
  ["MagicNumber", "181888", false],
];

const menus = ["文件(F)", "显示(V)", "插入(I)", "图表(C)", "工具(T)", "窗口(W)", "帮助(H)"];

export default function App() {
  return (
    <Screen>
      <Global />
      <MainWindow>
        <TitleBar>
          <Mt4Icon size={16} />
          <WindowTitle>1621074: DooPrime-Live 2 - Doo Prime Limited - [XAUUSD,M1]</WindowTitle>
          <CaptionButtons>
            <CaptionButton $w={28} aria-label="最小化">
              <svg width="12" height="12"><rect x=".5" y="5.500" width="11" height="4" rx="1" fill="#fff" stroke="#4a4f58" /></svg>
            </CaptionButton>
            <CaptionButton $w={27} aria-label="还原">
              <svg width="12" height="10"><path d="M.5.500h11v9H.500zM4 4h4v2.500H4z" fill="#fff" fillRule="evenodd" stroke="#4a4f58" /></svg>
            </CaptionButton>
            <CaptionButton $w={42} $close aria-label="关闭"><CloseGlyph /></CaptionButton>
          </CaptionButtons>
        </TitleBar>
        <MenuBar>
          <svg width="12" height="16"><rect x=".5" y=".500" width="11" height="15" rx="2" fill="#fff" stroke="#3c7fd0" /></svg>
          {menus.map((m) => <MenuItem key={m}>{m}</MenuItem>)}
          <MdiButtons>
            <MdiButton aria-label="最小化图表"><svg width="8" height="8"><path d="M1 6h6" stroke="#7a90a8" strokeWidth="2" /></svg></MdiButton>
            <MdiButton aria-label="还原图表"><svg width="10" height="10"><path d="M3.500 3V.500h5v4H6M.500 3.500h5.500v5H.500zM.500 4.500H6M3.500 1.500h5" fill="none" stroke="#7a90a8" /></svg></MdiButton>
            <MdiButton aria-label="关闭图表"><svg width="8" height="8"><path d="M1 1l6 6M7 1L1 7" stroke="#7a90a8" strokeWidth="2" /></svg></MdiButton>
          </MdiButtons>
        </MenuBar>
        <ToolBar>
          <IconButton aria-label="搜索">
            <svg width="15" height="15" viewBox="0 0 15 15">
              <path d="M1.500 13.500L6.500 8" stroke="#2a5fc4" strokeWidth="3" />
              <circle cx="9.500" cy="5.500" r="4" fill="#e6f0fc" stroke="#2f66cc" strokeWidth="1.600" />
            </svg>
          </IconButton>
          <IconButton aria-label="消息">
            <svg width="24" height="20" viewBox="0 0 24 20">
              <path d="M7 8c-8 0-8 8-3 8v3l4-3c9 0 8-8-1-8z" fill="#e6e6ea" stroke="#a5a5ad" />
              <circle cx="15" cy="8" r="8" fill="#e02a1a" />
              <text x="11" y="13" fill="#fff" fontSize="13" fontFamily={ui}>1</text>
            </svg>
          </IconButton>
        </ToolBar>
        <ChartArea><Chart /></ChartArea>
        <ChartTabs>
          <IconButton aria-label="向左"><svg width="7" height="7"><path d="M5 0v6L1 3z" fill="#808080" /></svg></IconButton>
          <IconButton aria-label="向右"><svg width="7" height="7"><path d="M1 0v6l4-3z" fill="#808080" /></svg></IconButton>
        </ChartTabs>
        <Terminal>
          <TradeTable>
            <colgroup>
              <col />
              {[1, 2, 3, 4, 5].map((n) => <col key={n} width={144} />)}
              <col width={223} />
            </colgroup>
            <thead>
              <tr>{["价格", "止损", "止盈", "价格", "手续费", "库存费", "获利"].map((h, i) => <th key={i}>{h}</th>)}</tr>
            </thead>
            <tbody>
              <tr><td colSpan={7}>0.00</td></tr>
            </tbody>
          </TradeTable>
        </Terminal>
        <TerminalTabs />
        <Tester>
          <SideTab>测试</SideTab>
          <TesterBody>
            <Form onSubmit={(e) => e.preventDefault()}>
              <Label htmlFor="expert">EA交易:</Label>
              <GreySelectBox $span={3} $flat><select id="expert" /><Arrow /></GreySelectBox>
              <FlatButton type="button">EA属性</FlatButton>

              <Label htmlFor="symbol">交易品种:</Label>
              <SelectBox><select id="symbol" /><Arrow /></SelectBox>
              <Label htmlFor="period">时间周期:</Label>
              <SelectBox $code><select id="period"><option>M5</option></select><Arrow /></SelectBox>
              <FlatButton type="button">交易品种属性</FlatButton>

              <Label htmlFor="model">复盘模型:</Label>
              <SelectBox>
                <select id="model"><option>使用开盘价(以最快速的方法分析刚形成的柱线)</option></select>
                <Arrow />
              </SelectBox>
              <Label htmlFor="spread">点差:</Label>
              <SelectBox $flat $code><select id="spread"><option>30</option></select><Arrow /></SelectBox>
              <FlatButton type="button">打开图表</FlatButton>

              <DateRow>
                <CheckLabel htmlFor="useDate">适用日期:</CheckLabel>
                <CheckWrap><Check id="useDate" type="checkbox" defaultChecked /></CheckWrap>
                <Spacer $w={102} />
                <DateLabel htmlFor="from">从:</DateLabel>
                <DateField $after={110}><input id="from" defaultValue="2021.06.01" /><CalendarIcon /></DateField>
                <DateLabel htmlFor="to">到:</DateLabel>
                <DateField><input id="to" defaultValue="2022.11.08" /><CalendarIcon /></DateField>
                <Spacer />
                <CheckLabel htmlFor="opt">优化</CheckLabel>
                <CheckWrap><Check id="opt" type="checkbox" /></CheckWrap>
              </DateRow>
              <FlatButton type="button">修改EA交易</FlatButton>

              <Progress role="progressbar" aria-valuenow={100} />
              <FlatButton type="button" $bold>开始</FlatButton>
            </Form>
            <TesterTabs>
              <TesterTab $active>设置</TesterTab>
              {["结果", "净值图", "报告", "日志"].map((t) => <TesterTab key={t}>{t}</TesterTab>)}
            </TesterTabs>
          </TesterBody>
        </Tester>
        <StatusBar>
          <StatusCell>寻求帮助,请按F1键</StatusCell>
          <StatusCell $w={136}>Default</StatusCell>
          <StatusCell $w={116} />
          <StatusCell $w={82} />
          <StatusCell $w={81} />
          <StatusCell $w={78} />
          <StatusCell $w={80} />
          <StatusCell $w={78} />
          <StatusCell $w={160}>
            <svg width="23" height="16">
              <path d="M1 0v12M4 0v10M7 0v9M10 0v8M13 0v6M16 0v5M19 0v4M22 0v3" stroke="#6b8e10" strokeWidth="2" />
              <path d="M7 9v5M10 8v6M13 6v8M16 5v9M19 4v10M22 3v11" stroke="#0b4a86" strokeWidth="2" />
            </svg>
            18997/8 kb
          </StatusCell>
        </StatusBar>
      </MainWindow>

      <TaskBar>
        <Pinned $w={54} aria-label="开始菜单"><StartOrb /></Pinned>
        <Pinned $w={60} aria-label="应用"><PetalIcon /></Pinned>
        <Pinned $w={60} aria-label="Internet Explorer"><BrowserE color="#2b95f5" /></Pinned>
        <svg width="6" height="10"><path d="M0 0v10l5-5z" fill="#0a7cf0" /></svg>
        <Task $w={50} $light $stack aria-label="资源管理器"><FolderIcon /></Task>
        <Task aria-label="浏览器"><BrowserE color="#58b92e" disc /></Task>
        <Task aria-label="脚本"><ScriptIcon /></Task>
        {[0, 1, 2, 3, 4, 5, 6, 7].map((n) => (
          <Task key={n} $active={n === 2} aria-label="MetaTrader"><Mt4Icon /></Task>
        ))}
        <Task aria-label="微信"><WeChatIcon /></Task>
        <Tray>
          <TrayIcons />
          <Clock>20:24 周一<br />2022/11/28</Clock>
          <ShowDesktop aria-label="显示桌面" />
        </Tray>
      </TaskBar>

      <Dialog role="dialog" aria-labelledby="dlgTitle">
        <DialogTitle>
          <h2 id="dlgTitle">Expert - 狂风暴雨 v3</h2>
          <DialogCaption>
            <button aria-label="帮助">
              <svg width="9" height="13" viewBox="0 0 9 13">
                <path d="M1.500 3.500c0-3 6-3 6 0 0 2.500-3 2-3 5M4.500 10v2" fill="none" stroke="#3f4a58" strokeWidth="3.400" />
                <path d="M1.500 3.500c0-3 6-3 6 0 0 2.500-3 2-3 4.500M4.500 10v1.500" fill="none" stroke="#fff" strokeWidth="1.600" />
              </svg>
            </button>
            <button aria-label="关闭对话框"><CloseGlyph /></button>
          </DialogCaption>
        </DialogTitle>
        <DialogClient>
          <Tabs role="tablist">
            <Tab role="tab">关于</Tab>
            <Tab role="tab">常用</Tab>
            <Tab role="tab" $active>输入参数</Tab>
          </Tabs>
          <Page>
            <ListBox>
              <ParamTable>
                <thead><tr><th>变量</th><th>赋值</th></tr></thead>
                <tbody>
                  {params.map(([name, value, real]) => (
                    <tr key={name}>
                      <td><ParamName><ParamIcon real={real} />{name}</ParamName></td>
                      <td>{value}</td>
                    </tr>
                  ))}
                </tbody>
              </ParamTable>
            </ListBox>
            <SideButtons>
              <Button $w={103}>加载(L)</Button>
              <Button $w={103}>保存(S)</Button>
            </SideButtons>
          </Page>
          <DialogButtons>
            <Button $w={73} $primary>确定</Button>
            <Button $w={73}>取消</Button>
            <Button $w={73}>重设</Button>
          </DialogButtons>
        </DialogClient>
      </Dialog>

      <SideBadge width="20" height="48" viewBox="1900 221 20 48">
        <circle cx="1924" cy="245" r="22.500" fill="#45b563" stroke="#fff" strokeWidth="2.500" />
        <path d="M1904 240c3-10 9-15 16-16v14z" fill="#8ddc9c" opacity=".6" />
        <text x="1906" y="249" fill="#fff" fontSize="12" fontWeight="700" fontFamily={ui}>27</text>
      </SideBadge>

      <Watermark aria-hidden="true">
        <defs>
          <pattern id="wm" width="250" height="250" patternUnits="userSpaceOnUse">
            <text
              transform="translate(60 180) rotate(-35)"
              fontFamily="DejaVu Sans Mono, monospace"
              fontWeight="700"
              fontSize="34"
              fill="#ffffff"
              fillOpacity=".08"
              stroke="#808080"
              strokeOpacity=".3"
            >
              eahub.cn
            </text>
          </pattern>
        </defs>
        <rect width="100%" height="100%" fill="url(#wm)" />
      </Watermark>
    </Screen>
  );
}
